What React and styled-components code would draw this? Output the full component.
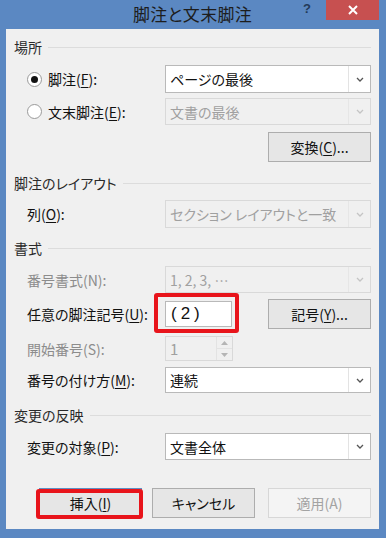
import React from "react";
import styled, { createGlobalStyle } from "styled-components";

const GlobalStyle = createGlobalStyle`
  html, body {
    margin: 0;
    padding: 0;
    background: #5b88c2;
  }
  body {
    font-family: "Noto Sans CJK JP", "Liberation Sans", sans-serif;
    font-feature-settings: "palt";
  }
`;

const Window = styled.div`
  width: 386px;
  height: 538px;
  box-sizing: border-box;
  background: #5b88c2;
  display: flex;
  flex-direction: column;
  padding: 0 7px 9px 6px;
`;

const TitleBar = styled.div`
  height: 29px;
  position: relative;
  display: flex;
  justify-content: center;
  align-items: flex-start;
`;

const Title = styled.div`
  font-size: 17px;
  line-height: 29px;
  margin-top: -1px;
  color: #1d1d1d;
  letter-spacing: 0.3px;
`;

const HelpMark = styled.div`
  position: absolute;
  right: 68px;
  top: 0;
  font-family: "Liberation Sans", sans-serif;
  font-weight: bold;
  font-size: 13px;
  line-height: 18px;
  color: #233a58;
`;

const CloseButton = styled.div`
  position: absolute;
  right: 0;
  top: 0;
  width: 53px;
  height: 20px;
  background: #c75050;
  display: flex;
  align-items: center;
  justify-content: center;
`;

const Panel = styled.div`
  flex: 1;
  background: #f0f0f0;
  padding: 9px 8px 0 8px;
  display: flex;
  flex-direction: column;
`;

const Header = styled.div`
  height: 18px;
  margin-top: ${(p) => p.$mt || 0}px;
  display: flex;
  align-items: center;
  font-size: 14px;
  color: #2a2a2a;
  &::after {
    content: "";
    flex: 1;
    height: 1px;
    background: #dcdcdc;
    margin-left: 6px;
  }
`;

const Row = styled.div`
  height: ${(p) => p.$h || 27}px;
  margin-top: ${(p) => p.$mt || 0}px;
  display: flex;
  align-items: center;
  padding-left: 13px;
`;

const Label = styled.div`
  width: 138px;
  flex-shrink: 0;
  font-size: 14px;
  color: ${(p) => (p.$disabled ? "#8c8c8c" : "#111")};
  display: flex;
  align-items: center;
  white-space: nowrap;
  u {
    text-decoration: underline;
    text-underline-offset: 2px;
  }
`;

const Radio = styled.span`
  width: 15px;
  height: 15px;
  box-sizing: border-box;
  border-radius: 50%;
  border: 1px solid #9a9a9a;
  background: #fff;
  margin-right: 6px;
  display: flex;
  align-items: center;
  justify-content: center;
  &::after {
    content: "";
    width: 7px;
    height: 7px;
    border-radius: 50%;
    background: ${(p) => (p.$checked ? "#111" : "transparent")};
  }
`;

const Select = styled.div`
  flex: 1;
  align-self: stretch;
  box-sizing: border-box;
  border: 1px solid ${(p) => (p.$disabled ? "#d9d9d9" : "#b9b9b9")};
  background: ${(p) => (p.$disabled ? "#f0f0f0" : "#fff")};
  display: flex;
  align-items: center;
`;

const SelectText = styled.div`
  flex: 1;
  padding-left: 4px;
  font-size: 14px;
  color: ${(p) => (p.$disabled ? "#a0a0a0" : "#111")};
  white-space: nowrap;
  overflow: hidden;
`;

const ArrowBox = styled.div`
  width: 21px;
  align-self: stretch;
  border-left: 1px solid ${(p) => (p.$disabled ? "#e6e6e6" : "#e3e3e3")};
  display: flex;
  align-items: center;
  justify-content: center;
`;

const Spacer = styled.div`
  flex: 1;
`;

const Button = styled.div`
  width: 103px;
  height: 30px;
  box-sizing: border-box;
  border: 1px solid ${(p) => (p.$disabled ? "#d7d7d7" : p.$default ? "#5f8fc4" : "#adadad")};
  background: ${(p) => (p.$disabled ? "#f4f4f4" : "#e6e6e6")};
  color: ${(p) => (p.$disabled ? "#a3a3a3" : "#111")};
  font-size: 14px;
  display: flex;
  align-items: center;
  justify-content: center;
  position: relative;
  flex-shrink: 0;
  u {
    text-decoration: underline;
    text-underline-offset: 2px;
  }
`;

const TextInput = styled.div`
  width: 67px;
  height: 26px;
  box-sizing: border-box;
  border: 1px solid #b9b9b9;
  background: #fff;
  font-family: "Liberation Sans", "Noto Sans CJK JP", sans-serif;
  font-size: 17px;
  letter-spacing: 4px;
  color: #111;
  padding-left: 5px;
  display: flex;
  align-items: center;
  position: relative;
`;

const Highlight = styled.div`
  position: absolute;
  top: ${(p) => p.$t}px;
  right: ${(p) => p.$r}px;
  bottom: ${(p) => p.$b}px;
  left: ${(p) => p.$l}px;
  border: 4.5px solid #e8141b;
  border-radius: 3px;
  pointer-events: none;
`;

const Spinner = styled.div`
  width: 68px;
  height: 25px;
  box-sizing: border-box;
  border: 1px solid #d9d9d9;
  background: #f0f0f0;
  display: flex;
`;

const SpinText = styled.div`
  flex: 1;
  font-size: 15px;
  color: #a0a0a0;
  padding-left: 4px;
  display: flex;
  align-items: center;
`;

const SpinButtons = styled.div`
  width: 15px;
  border-left: 1px solid #e3e3e3;
  display: flex;
  flex-direction: column;
`;

const SpinHalf = styled.div`
  flex: 1;
  display: flex;
  align-items: center;
  justify-content: center;
  & + & {
    border-top: 1px solid #e3e3e3;
  }
`;

const ButtonBar = styled.div`
  margin-top: 28px;
  display: flex;
  padding-left: 25px;
  gap: 10px;
  & > :last-child {
    margin-left: 3px;
  }
`;

const Chevron = ({ disabled }) => (
  <svg width="8" height="5" viewBox="0 0 8 5">
    <path
      d="M1 1 L4 4 L7 1"
      fill="none"
      stroke={disabled ? "#c4c4c4" : "#555"}
      strokeWidth="1.3"
    />
  </svg>
);

const Tri = ({ up }) => (
  <svg width="7" height="4" viewBox="0 0 7 4">
    <path d={up ? "M0 4 L3.5 0 L7 4 Z" : "M0 0 L3.5 4 L7 0 Z"} fill="#b5b5b5" />
  </svg>
);

const Dropdown = ({ value, disabled }) => (
  <Select $disabled={disabled}>
    <SelectText $disabled={disabled}>{value}</SelectText>
    <ArrowBox $disabled={disabled}>
      <Chevron disabled={disabled} />
    </ArrowBox>
  </Select>
);

export default function App() {
  return (
    <>
      <GlobalStyle />
      <Window>
        <TitleBar>
          <Title>脚注と文末脚注</Title>
          <HelpMark>?</HelpMark>
          <CloseButton>
            <svg width="10" height="10" viewBox="0 0 10 10">
              <path d="M1 1 L9 9 M9 1 L1 9" stroke="#fff" strokeWidth="2" />
            </svg>
          </CloseButton>
        </TitleBar>
        <Panel>
          <Header>場所</Header>
          <Row $mt={9} $h={28}>
            <Label>
              <Radio $checked />
              脚注(<u>F</u>):
            </Label>
            <Dropdown value="ページの最後" />
          </Row>
          <Row $mt={5} $h={27}>
            <Label>
              <Radio />
              文末脚注(<u>E</u>):
            </Label>
            <Dropdown value="文書の最後" disabled />
          </Row>
          <Row $mt={7} $h={30}>
            <Spacer />
            <Button>
              変換(<u>C</u>)...
            </Button>
          </Row>

          <Header $mt={12}>脚注のレイアウト</Header>
          <Row $mt={8} $h={28}>
            <Label>
              列(<u>O</u>):
            </Label>
            <Dropdown value="セクション レイアウトと一致" disabled />
          </Row>

          <Header $mt={11}>書式</Header>
          <Row $mt={9} $h={27}>
            <Label $disabled>番号書式(N):</Label>
            <Dropdown value="1, 2, 3, …" disabled />
          </Row>
          <Row $mt={6} $h={30}>
            <Label>
              任意の脚注記号(<u>U</u>):
            </Label>
            <TextInput>
              (2)
              <Highlight $t={-9} $r={-8} $b={-7} $l={-12} />
            </TextInput>
            <Spacer />
            <Button>
              記号(<u>Y</u>)...
            </Button>
          </Row>
          <Row $mt={7} $h={25}>
            <Label $disabled>開始番号(S):</Label>
            <Spinner>
              <SpinText>1</SpinText>
              <SpinButtons>
                <SpinHalf>
                  <Tri up />
                </SpinHalf>
                <SpinHalf>
                  <Tri />
                </SpinHalf>
              </SpinButtons>
            </Spinner>
          </Row>
          <Row $mt={6} $h={26}>
            <Label>
              番号の付け方(<u>M</u>):
            </Label>
            <Dropdown value="連続" />
          </Row>

          <Header $mt={13}>変更の反映</Header>
          <Row $mt={9} $h={27}>
            <Label>
              変更の対象(<u>P</u>):
            </Label>
            <Dropdown value="文書全体" />
          </Row>

          <ButtonBar>
            <Button $default>
              挿入(<u>I</u>)
              <Highlight $t={0} $r={-2} $b={-2} $l={-4} />
            </Button>
            <Button>キャンセル</Button>
            <Button $disabled>適用(A)</Button>
          </ButtonBar>
        </Panel>
      </Window>
    </>
  );
}
